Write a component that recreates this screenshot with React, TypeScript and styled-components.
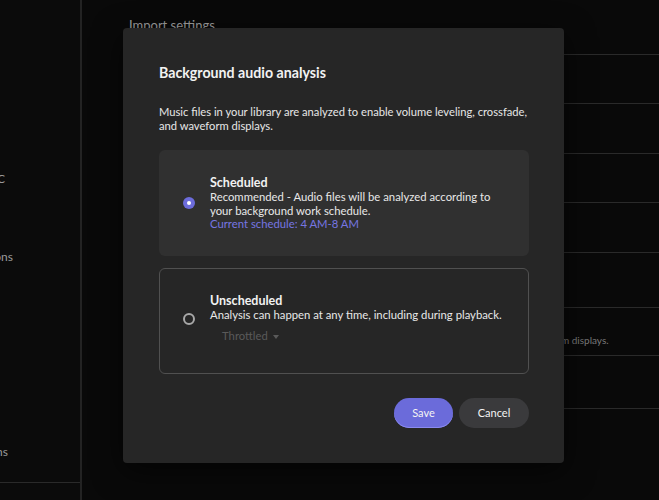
import styled, { createGlobalStyle } from 'styled-components';

const GlobalStyle = createGlobalStyle`
  html, body {
    margin: 0;
    padding: 0;
    background: #090909;
  }
  body {
    font-family: Lato, "Noto Sans", sans-serif;
    -webkit-font-smoothing: antialiased;
  }
`;

// 페이지 전체
const Page = styled.div`
  position: relative;
  display: flex;
  width: 659px;
  height: 500px;
  overflow: hidden;
  background: #090909;
`;

// 왼쪽 사이드바
const Sidebar = styled.aside`
  width: 80px;
  flex-shrink: 0;
  display: flex;
  flex-direction: column;
  background: #0b0b0b;
  border-right: 2px solid #232323;
  overflow: hidden;
`;

const Nav = styled.nav`
  flex: 1;
  display: flex;
  flex-direction: column;
  padding-top: 159px;
`;

const NavItem = styled.div<{ $end: number }>`
  display: flex;
  justify-content: flex-end;
  align-items: center;
  width: ${(p) => p.$end}px;
  height: 39px;
  font-size: 12px;
  color: #9a9a9a;
  white-space: nowrap;
`;

const SidebarFooter = styled.div`
  height: 17px;
  border-top: 1px solid #2a2a2a;
`;

// 설정 목록
const Main = styled.main`
  flex: 1;
  padding: 17px 0 0 47px;
`;

const SectionTitle = styled.h2`
  margin: 0 0 21px;
  font-size: 13px;
  line-height: 16px;
  font-weight: 400;
  color: #a0a0a0;
`;

const Row = styled.div<{ $h: number }>`
  height: ${(p) => p.$h}px;
  box-sizing: border-box;
  border-top: 1px solid #2a2a2a;
  display: flex;
  flex-direction: column;
  justify-content: center;
  gap: 2px;

  &:last-child {
    border-bottom: 1px solid #2a2a2a;
  }
`;

const RowTitle = styled.div`
  font-size: 12px;
  color: #d0d0d0;
`;

const RowDesc = styled.div`
  font-size: 10px;
  color: #7a7a7a;
  white-space: nowrap;
`;

// 모달
const Dialog = styled.div`
  position: absolute;
  left: 123px;
  top: 28px;
  width: 441px;
  box-sizing: border-box;
  padding: 36px 35px 35px 36px;
  background: #262626;
  border-radius: 4px;
  box-shadow: 0 8px 30px rgba(0, 0, 0, 0.6);
  color: #ededed;
`;

const DialogTitle = styled.h1`
  margin: 0 0 23px;
  font-size: 14.2px;
  line-height: 18px;
  font-weight: 700;
  color: #f2f2f2;
`;

const DialogText = styled.p`
  margin: 0 -4px 17px 0;
  font-size: 11.2px;
  line-height: 14px;
  color: #e6e6e6;
`;

const Options = styled.div`
  display: flex;
  flex-direction: column;
  gap: 12px;
`;

const Option = styled.label<{ $selected?: boolean }>`
  display: flex;
  align-items: center;
  gap: 15px;
  box-sizing: border-box;
  padding: ${(p) => (p.$selected ? '25px 24px 25px' : '24px 23px 27px')};
  border-radius: 6px;
  background: ${(p) => (p.$selected ? '#303030' : '#262626')};
  border: ${(p) => (p.$selected ? 'none' : '1px solid #505050')};
  cursor: pointer;
`;

const Radio = styled.span<{ $checked?: boolean }>`
  flex-shrink: 0;
  width: 12px;
  height: 12px;
  box-sizing: border-box;
  border-radius: 50%;
  display: flex;
  align-items: center;
  justify-content: center;
  background: ${(p) => (p.$checked ? '#6c6cdb' : 'transparent')};
  border: ${(p) => (p.$checked ? 'none' : '2px solid #a8a8a8')};

  &::after {
    content: '';
    display: ${(p) => (p.$checked ? 'block' : 'none')};
    width: 4px;
    height: 4px;
    border-radius: 50%;
    background: #fff;
  }
`;

const OptionBody = styled.div`
  display: flex;
  flex-direction: column;
`;

const OptionTitle = styled.div`
  font-size: 12.5px;
  line-height: 15px;
  font-weight: 700;
  color: #f2f2f2;
`;

const OptionText = styled.div<{ $accent?: boolean }>`
  font-size: 11.3px;
  line-height: 13.7px;
  color: ${(p) => (p.$accent ? '#7676e2' : '#e8e8e8')};
`;

const Dropdown = styled.div`
  display: flex;
  align-items: center;
  gap: 5px;
  height: 20px;
  margin: 4px 0 0 12px;
  font-size: 11.3px;
  color: #5a5a5a;
`;

const Caret = styled.span`
  width: 0;
  height: 0;
  border-left: 3px solid transparent;
  border-right: 3px solid transparent;
  border-top: 4px solid #5a5a5a;
  margin-top: 2px;
`;

const Actions = styled.div`
  display: flex;
  justify-content: flex-end;
  gap: 6px;
  margin-top: 24px;
`;

const Button = styled.button<{ $primary?: boolean }>`
  height: 30px;
  padding: 0 ${(p) => (p.$primary ? '17px' : '16px')};
  min-width: ${(p) => (p.$primary ? '59px' : '70px')};
  border: none;
  border-radius: 15px;
  font-family: inherit;
  font-size: 11px;
  color: #f4f4f4;
  background: ${(p) => (p.$primary ? '#6b6bda' : '#3a3a3c')};
  box-shadow: ${(p) => (p.$primary ? 'inset 0 -1px 0 #8a8af0' : 'none')};
  cursor: pointer;
`;

const navItems = [
  { label: 'MIDI & OSC', end: 5 },
  { label: 'Audio', end: 0 },
  { label: 'Integrations', end: 13 },
  { label: 'Library', end: 0 },
  { label: 'Display', end: 0 },
  { label: 'Files', end: 0 },
  { label: 'Keys', end: 0 },
  { label: 'Extensions', end: 8 },
];

const rows = [
  { title: 'Import location', h: 49 },
  { title: 'Copy files to library', h: 50 },
  { title: 'File naming', h: 49 },
  { title: 'Watch folders', h: 50 },
  { title: 'Duplicate detection', h: 55 },
  {
    title: 'Background audio analysis',
    desc: 'Music files in your library are analyzed by default to enable volume leveling, crossfade, and waveform displays.',
    h: 48,
  },
  { title: 'Metadata lookup', h: 54 },
];

export default function App() {
  return (
    <>
      <GlobalStyle />
      <Page>
        <Sidebar>
          <Nav>
            {navItems.map((item) => (
              <NavItem key={item.label} $end={item.end}>
                {item.end > 0 ? item.label : ''}
              </NavItem>
            ))}
          </Nav>
          <SidebarFooter />
        </Sidebar>
        <Main>
          <SectionTitle>Import settings</SectionTitle>
          {rows.map((row) => (
            <Row key={row.title} $h={row.h}>
              <RowTitle>{row.title}</RowTitle>
              {row.desc && <RowDesc>{row.desc}</RowDesc>}
            </Row>
          ))}
        </Main>

        <Dialog role="dialog">
          <DialogTitle>Background audio analysis</DialogTitle>
          <DialogText>
            Music files in your library are analyzed to enable volume leveling, crossfade,
            and waveform displays.
          </DialogText>
          <Options>
            <Option $selected>
              <Radio $checked />
              <OptionBody>
                <OptionTitle>Scheduled</OptionTitle>
                <OptionText>
                  Recommended - Audio files will be analyzed according to
                  <br />
                  your background work schedule.
                </OptionText>
                <OptionText $accent>Current schedule: 4 AM-8 AM</OptionText>
              </OptionBody>
            </Option>
            <Option>
              <Radio />
              <OptionBody>
                <OptionTitle>Unscheduled</OptionTitle>
                <OptionText>Analysis can happen at any time, including during playback.</OptionText>
                <Dropdown>
                  Throttled <Caret />
                </Dropdown>
              </OptionBody>
            </Option>
          </Options>
          <Actions>
            <Button $primary>Save</Button>
            <Button>Cancel</Button>
          </Actions>
        </Dialog>
      </Page>
    </>
  );
}
